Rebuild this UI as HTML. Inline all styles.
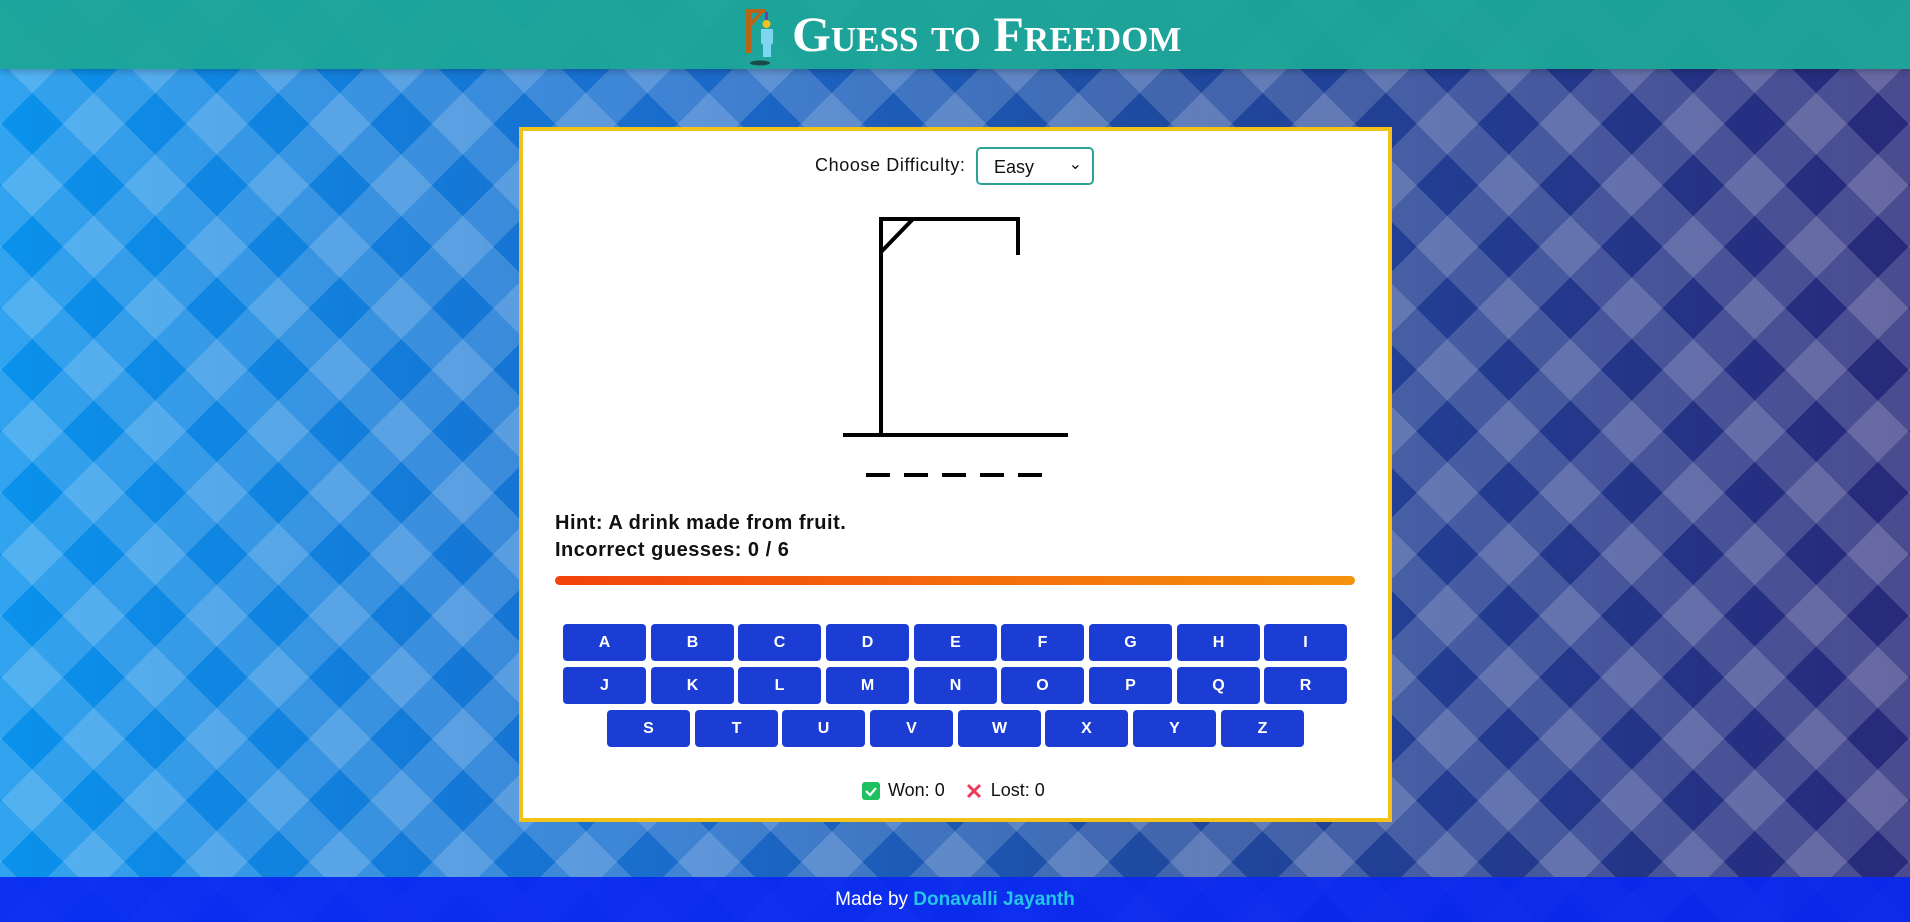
<!DOCTYPE html>
<html><head><meta charset="utf-8"><style>
*{box-sizing:border-box;margin:0;padding:0}
body{width:1910px;height:922px;overflow:hidden;font-family:"Liberation Sans",sans-serif;position:relative;
background:
repeating-linear-gradient(45deg,rgba(255,255,255,.16) 0 43.5px,transparent 43.5px 87px),
repeating-linear-gradient(-45deg,rgba(255,255,255,.16) 0 43.5px,transparent 43.5px 87px),
linear-gradient(90deg,#0a92ec 0%,#1a6ccc 35%,#1e4aa0 60%,#28297a 100%);}
.hdr{position:absolute;left:0;top:0;width:1910px;height:69px;background:rgba(28,166,152,.96);box-shadow:0 3px 6px rgba(0,0,0,.2);}
.title{position:absolute;left:792px;top:9px;font-family:"Liberation Serif",serif;font-weight:bold;font-size:50px;font-variant:small-caps;color:#fff;line-height:50px}
.card{position:absolute;left:519px;top:127px;width:873px;height:695px;background:#fff;border:4px solid #f2c21a;}
.ft{position:absolute;left:0;top:877px;width:1910px;height:45px;background:rgba(10,40,240,.93);color:#fff;text-align:center;font-size:19px;line-height:45px}
.ft b{color:#22c6e6}
.lbl{position:absolute;left:815px;top:155px;font-size:18px;color:#111;letter-spacing:.6px}
.sel{position:absolute;left:976px;top:147px;width:118px;height:38px;border:2px solid #2ba497;border-radius:5px;font-size:18px;padding:8px 0 0 16px;color:#111}
.sel span{position:absolute;right:10px;top:5px;font-size:16px}
.txt{position:absolute;left:555px;font-size:20px;font-weight:bold;color:#111;letter-spacing:.5px}
.bar{position:absolute;left:555px;top:576px;width:800px;height:9px;border-radius:5px;background:linear-gradient(90deg,#f2420c,#f5920c)}
.k{position:absolute;width:83px;height:37px;background:#1c3dd4;color:#fff;border-radius:4px;font-size:16px;font-weight:bold;text-align:center;line-height:37px}
.wl{position:absolute;top:780px;left:862px;font-size:18px;color:#111;display:flex;align-items:center;gap:8px}
</style></head><body>
<div class="hdr">
<svg style="position:absolute;left:742px;top:7px" width="36" height="60" viewBox="0 0 36 60">
<path d="M4 2h20v4H9v40H4z" fill="#b8651a"/><path d="M7 16l10-10h4L9 20z" fill="#b8651a"/>
<rect x="23" y="5" width="3" height="8" fill="#7a3aa8"/><circle cx="24.5" cy="17" r="4" fill="#f2c21a"/>
<path d="M19 22h12v14l-2 2v12h-8V38l-2-2z" fill="#7fd6f0"/><ellipse cx="18" cy="56" rx="10" ry="2.5" fill="#1a4a48"/></svg>
<div class="title">Guess to Freedom</div></div>
<div class="card"></div>
<div class="lbl">Choose Difficulty:</div>
<div class="sel">Easy<span>&#8964;</span></div>
<svg style="position:absolute;left:840px;top:212px" width="240" height="270" viewBox="840 212 240 270">
<g stroke="#000" stroke-width="4" fill="none">
<path d="M881 435V219h137v36"/><path d="M881 252l32-33"/><path d="M843 435h225"/>
<path d="M866 475h24M904 475h24M942 475h24M980 475h24M1018 475h24"/></g></svg>
<div class="txt" style="top:512px">Hint: A drink made from fruit.</div>
<div class="txt" style="top:539px">Incorrect guesses: 0 / 6</div>
<div class="bar"></div>
<div class="k" style="left:563px;top:624px">A</div><div class="k" style="left:651px;top:624px">B</div><div class="k" style="left:738px;top:624px">C</div><div class="k" style="left:826px;top:624px">D</div><div class="k" style="left:914px;top:624px">E</div><div class="k" style="left:1001px;top:624px">F</div><div class="k" style="left:1089px;top:624px">G</div><div class="k" style="left:1177px;top:624px">H</div><div class="k" style="left:1264px;top:624px">I</div>
<div class="k" style="left:563px;top:667px">J</div><div class="k" style="left:651px;top:667px">K</div><div class="k" style="left:738px;top:667px">L</div><div class="k" style="left:826px;top:667px">M</div><div class="k" style="left:914px;top:667px">N</div><div class="k" style="left:1001px;top:667px">O</div><div class="k" style="left:1089px;top:667px">P</div><div class="k" style="left:1177px;top:667px">Q</div><div class="k" style="left:1264px;top:667px">R</div>
<div class="k" style="left:607px;top:710px">S</div><div class="k" style="left:695px;top:710px">T</div><div class="k" style="left:782px;top:710px">U</div><div class="k" style="left:870px;top:710px">V</div><div class="k" style="left:958px;top:710px">W</div><div class="k" style="left:1045px;top:710px">X</div><div class="k" style="left:1133px;top:710px">Y</div><div class="k" style="left:1221px;top:710px">Z</div>
<div class="wl"><svg width="18" height="18"><rect width="18" height="18" rx="3" fill="#1ec15f"/><path d="M4 9l4 4 6-7" stroke="#fff" stroke-width="2.2" fill="none"/></svg>Won: 0
<svg width="18" height="18" style="margin-left:12px"><path d="M3 3l12 12M15 3L3 15" stroke="#ee3a5a" stroke-width="3"/></svg>Lost: 0</div>
<div class="ft">Made by <b>Donavalli Jayanth</b></div>
</body></html>
